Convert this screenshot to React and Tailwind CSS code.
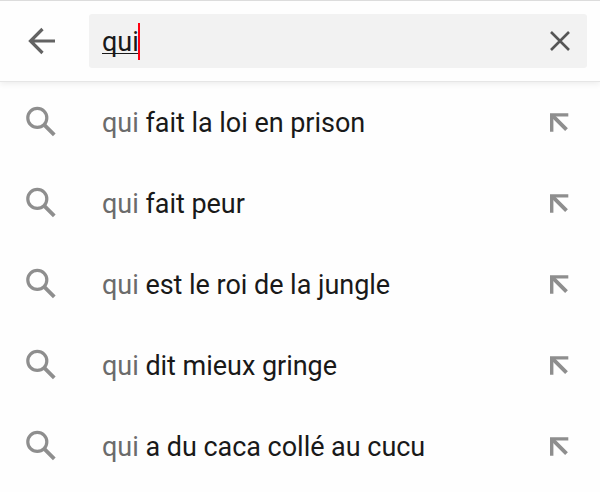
import React, { useState } from "react";

const suggestions = [
    "fait la loi en prison",
    "fait peur",
    "est le roi de la jungle",
    "dit mieux gringe",
    "a du caca collé au cucu",
];

function BackIcon() {
    return (
        <svg className="block h-[30px] w-[30px]" viewBox="0 0 30 30" fill="none" stroke="#636363" strokeWidth="3.2">
            <path d="M29 15H4.5M16.5 3L4.5 15L16.5 27" />
        </svg>
    );
}

function ClearIcon() {
    return (
        <svg className="block h-6 w-6" viewBox="0 0 24 24" fill="none" stroke="#555555" strokeWidth="2.6">
            <path d="M3 3L21 21M21 3L3 21" />
        </svg>
    );
}

function SearchIcon() {
    return (
        <svg className="block h-8 w-8" viewBox="0 0 32 32" fill="none" stroke="#8e8e8e">
            <circle cx="12.3" cy="11.9" r="9.5" strokeWidth="3.2" />
            <path d="M19.8 19.3L29.3 28.8" strokeWidth="3.8" />
        </svg>
    );
}

function InsertIcon() {
    return (
        <svg className="block h-5 w-5" viewBox="0 0 20 20" fill="none" stroke="#8e8e8e" strokeWidth="3.4">
            <path d="M19.3 2.9H2.7V19.7" />
            <path d="M3.5 3.7L17.5 17.7" strokeWidth="3.9" />
        </svg>
    );
}

function App() {
    const [query] = useState("qui");

    return (
        <div className="h-[492px] w-[600px] overflow-hidden bg-[#fefefe] font-['Roboto',sans-serif] text-[27px] leading-8 tracking-[-0.03px] text-[#191919]">
            {/* Barre de recherche */}
            <header className="flex h-[82px] items-center border-t border-b border-t-[#dcdcdc] border-b-[#e6e6e6] pl-[26px] pr-[13px] shadow-[0_2px_6px_rgba(0,0,0,0.07)]">
                <BackIcon />
                <div className="ml-[33px] flex h-[54px] flex-1 items-center rounded-[3px] bg-[#f2f2f2] pl-[13px] pr-[15px]">
                    <span className="pt-0.5 underline decoration-1 underline-offset-2 [text-decoration-skip-ink:none]">{query}</span>
                    <span className="-ml-px h-[37px] w-0.5 bg-[#ff0010]" />
                    <button type="button" className="ml-auto" aria-label="Effacer">
                        <ClearIcon />
                    </button>
                </div>
            </header>

            {/* Suggestions */}
            <ul>
                {suggestions.map((text) => (
                    <li key={text} className="flex h-[81px] items-center pb-0.5 pl-[25px] pr-[31px]">
                        <SearchIcon />
                        <span className="ml-[45px] flex-1 whitespace-nowrap pt-0.5">
                            <span className="text-[#6b6b6b]">{query}</span> {text}
                        </span>
                        <InsertIcon />
                    </li>
                ))}
            </ul>
        </div>
    );
}

export default App;
